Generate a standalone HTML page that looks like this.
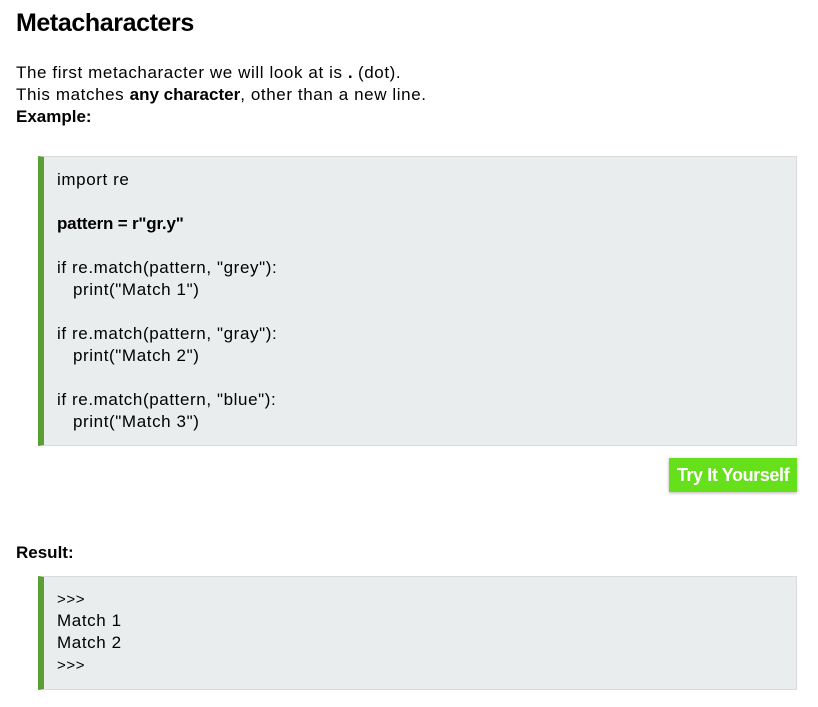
<!DOCTYPE html>
<html><head><style>
body{margin:0;background:#fff;font-family:"Liberation Sans",Arial,sans-serif;color:#000;width:818px;height:707px;position:relative;overflow:hidden}
.a{position:absolute;white-space:nowrap}
h1{position:absolute;left:16px;top:9px;margin:0;font-size:25px;font-weight:bold;letter-spacing:-0.4px}
.p{left:16px;font-size:17px;line-height:22px;letter-spacing:0.6px}
.p b{letter-spacing:0}
.box{position:absolute;left:38px;width:759px;background:#eaedee;border:1px solid #d9dbdc;border-left:6px solid #5b9e33;box-sizing:border-box}
.c{position:absolute;left:57px;font-size:17px;line-height:22px;white-space:pre;letter-spacing:0.6px}
.c b{letter-spacing:-0.2px}
.btn{position:absolute;left:669px;top:458px;width:128px;height:34px;background:#66e01a;color:#fff;font-weight:bold;font-size:18px;line-height:34px;text-align:center;box-shadow:0 1px 3px rgba(0,0,0,.3);letter-spacing:-0.4px}
</style></head><body>
<h1>Metacharacters</h1>
<div class="a p" style="top:62px">The first metacharacter we will look at is <b>.</b> (dot).<br>This matches <b>any character</b>, other than a new line.<br><b>Example:</b></div>
<div class="box" style="top:156px;height:290px"></div>
<div class="c" style="top:169px">import re

<b>pattern = r"gr.y"</b>

if re.match(pattern, "grey"):
   print("Match 1")

if re.match(pattern, "gray"):
   print("Match 2")

if re.match(pattern, "blue"):
   print("Match 3")</div>
<div class="btn">Try It Yourself</div>
<div class="a p" style="top:542px"><b>Result:</b></div>
<div class="box" style="top:576px;height:114px"></div>
<div class="c" style="top:589px;font-size:15px;line-height:22px">&gt;&gt;&gt;</div>
<div class="c" style="top:610px">Match 1
Match 2</div>
<div class="c" style="top:655px;font-size:15px">&gt;&gt;&gt;</div>
</body></html>
